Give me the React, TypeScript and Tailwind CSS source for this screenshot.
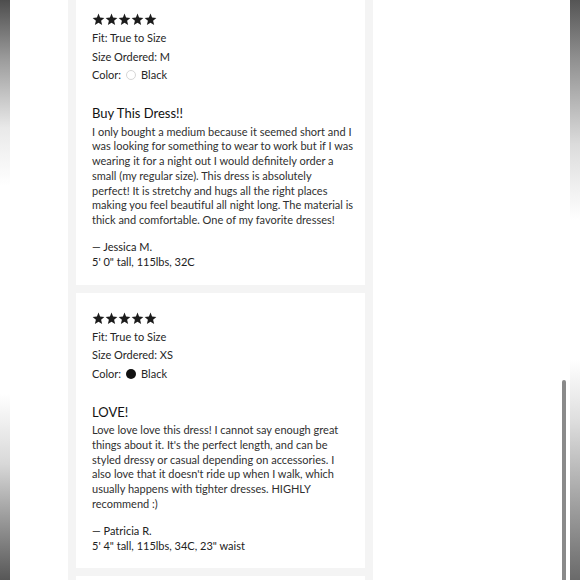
import React from 'react';

type Review = {
  size: string;
  colorFilled: boolean;
  title: string;
  body: string[];
  author: string;
  stats: string;
};

const reviews: Review[] = [
  {
    size: 'M',
    colorFilled: false,
    title: 'Buy This Dress!!',
    body: [
      'I only bought a medium because it seemed short and I',
      'was looking for something to wear to work but if I was',
      'wearing it for a night out I would definitely order a',
      'small (my regular size). This dress is absolutely',
      'perfect! It is stretchy and hugs all the right places',
      'making you feel beautiful all night long. The material is',
      'thick and comfortable. One of my favorite dresses!',
    ],
    author: '— Jessica M.',
    stats: '5\' 0" tall, 115lbs, 32C',
  },
  {
    size: 'XS',
    colorFilled: true,
    title: 'LOVE!',
    body: [
      'Love love love this dress! I cannot say enough great',
      "things about it. It's the perfect length, and can be",
      'styled dressy or casual depending on accessories. I',
      "also love that it doesn't ride up when I walk, which",
      'usually happens with tighter dresses. HIGHLY',
      'recommend :)',
    ],
    author: '— Patricia R.',
    stats: '5\' 4" tall, 115lbs, 34C, 23" waist',
  },
];

function Star() {
  return (
    <svg viewBox="0 0 24 24" className="h-[13px] w-[13px]" fill="#1c1c1c">
      <polygon points="12,1 14.9,8.4 22.8,9 16.8,14.1 18.7,22 12,17.8 5.3,22 7.2,14.1 1.2,9 9.1,8.4" />
    </svg>
  );
}

function ReviewCard({ review }: { review: Review }) {
  return (
    <div className="bg-white pl-[16px] pr-[10px] pt-[19px] pb-[15.5px]">
      <div className="flex h-[13px]">
        {[0, 1, 2, 3, 4].map((i) => (
          <Star key={i} />
        ))}
      </div>

      <div className="mt-[3px] text-[11px] leading-[18.5px] text-[#262626]">
        <div>Fit: True to Size</div>
        <div>Size Ordered: {review.size}</div>
        <div className="flex items-center">
          Color:
          {review.colorFilled ? (
            <span className="ml-[5px] mr-[5px] inline-block h-[10px] w-[10px] rounded-full bg-[#111]"></span>
          ) : (
            <span className="ml-[5px] mr-[5px] inline-block h-[10px] w-[10px] rounded-full border border-[#d6d6d6] bg-white"></span>
          )}
          Black
        </div>
      </div>

      <div className="mt-[19.5px] text-[13px] leading-[18px] text-[#111]">{review.title}</div>

      <div className="mt-[2.5px] text-[11px] leading-[14.8px] text-[#303030]">
        {review.body.map((line, i) => (
          <div key={i} className="whitespace-nowrap">
            {line}
          </div>
        ))}
      </div>

      <div className="mt-[11px] text-[11px] leading-[15px] text-[#222]">
        <div>{review.author}</div>
        <div>{review.stats}</div>
      </div>
    </div>
  );
}

export default function App() {
  return (
    <div
      className="relative flex h-[580px] w-[580px] overflow-hidden bg-white"
      style={{ fontFamily: 'Lato, "Open Sans", sans-serif' }}
    >
      {/* bordas escuras do print */}
      <div className="w-[10px] shrink-0 bg-[linear-gradient(to_bottom,#4d4d4d_0%,#9a9a9a_10%,#e9e9e9_22%,#ffffff_32%,#ffffff_68%,#d8d8d8_80%,#8a8a8a_92%,#575757_100%)]"></div>

      <div className="flex-1 pl-[58px]">
        <div className="-mt-[6px] flex w-[305px] flex-col gap-[8px] bg-[#f4f4f4] px-[8px]">
          {reviews.map((r, i) => (
            <ReviewCard key={i} review={r} />
          ))}
          <div className="h-[40px] bg-white"></div>
        </div>
      </div>

      <div className="w-[10px] shrink-0 bg-[linear-gradient(to_bottom,#555555_0%,#8f8f8f_10%,#dcdcdc_25%,#ffffff_38%,#ffffff_62%,#e0e0e0_72%,#9c9c9c_88%,#6a6a6a_100%)]"></div>

      {/* barra de rolagem */}
      <div className="absolute left-[562px] top-[380px] h-[210px] w-[4px] rounded-full bg-[#8a8a8a]"></div>
    </div>
  );
}
